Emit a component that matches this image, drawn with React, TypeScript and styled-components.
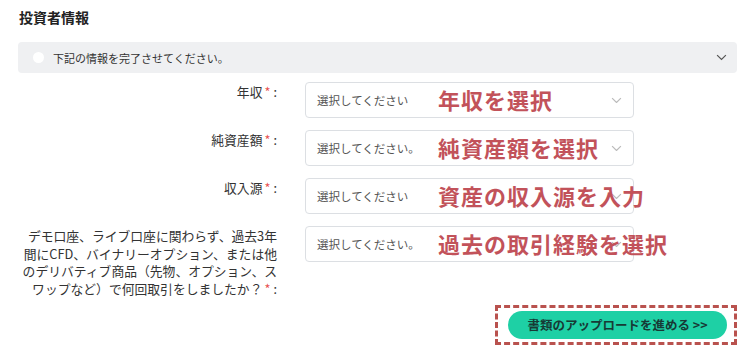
import React from "react";
import styled, { createGlobalStyle } from "styled-components";

const Global = createGlobalStyle`
  html, body { margin: 0; padding: 0; background: #fff; }
  body { font-family: "Noto Sans CJK JP", "Noto Sans", sans-serif; color: #333; }
`;

const Page = styled.div`
  width: 750px;
  height: 351px;
  box-sizing: border-box;
  padding: 7px 13px 0 18px;
  overflow: hidden;
`;

const Title = styled.h2`
  margin: 0 0 0 1px;
  font-size: 14px;
  font-weight: 700;
  line-height: 20px;
  color: #222;
`;

const Banner = styled.div`
  margin-top: 15px;
  height: 31px;
  background: #eff0f2;
  border-radius: 4px;
  display: flex;
  align-items: center;
  padding: 0 10px 0 15px;
  gap: 9px;
`;

const Dot = styled.span`
  width: 11px;
  height: 11px;
  border-radius: 50%;
  background: #fff;
`;

const BannerText = styled.span`
  flex: 1;
  font-size: 11px;
  color: #333;
`;

const Form = styled.div`
  margin-top: 9px;
  display: grid;
  grid-template-columns: 262px 329px;
  column-gap: 25px;
  row-gap: 12px;
`;

const Label = styled.div`
  padding-top: 1px;
  padding-right: 3px;
  text-align: right;
  font-size: 12.8px;
  line-height: 17.7px;
  color: #333;
  white-space: nowrap;
`;

const Req = styled.span`
  color: #e8504f;
  margin: 0 3px 0 2px;
`;

const Select = styled.div`
  position: relative;
  height: 36px;
  box-sizing: border-box;
  border: 1px solid #dcdfe3;
  border-radius: 4px;
  display: flex;
  align-items: center;
  padding: 0 11px;
`;

const Placeholder = styled.span`
  flex: 1;
  font-size: 11.5px;
  color: #555;
`;

const Note = styled.span`
  position: absolute;
  left: 132px;
  top: 50%;
  transform: translateY(-52%);
  font-size: 22px;
  font-weight: 700;
  letter-spacing: 1px;
  color: #c2525a;
  white-space: nowrap;
`;

const Footer = styled.div`
  display: flex;
  justify-content: flex-end;
  margin-top: 7px;
`;

const Dashed = styled.div`
  border: 3px dashed #b9524e;
  padding: 3px 7px 3px 10px;
`;

const Button = styled.button`
  height: 28px;
  width: 219px;
  border: none;
  border-radius: 14px;
  background: #1ed0a5;
  color: #173a35;
  font-family: "Noto Sans CJK JP", sans-serif;
  font-size: 12.5px;
  font-weight: 700;
  padding: 0;
`;

const Chevron = ({ color, size }: { color: string; size: number }) => (
  <svg width={size} height={size * 0.6} viewBox="0 0 10 6" fill="none">
    <path d="M1 1l4 4 4-4" stroke={color} strokeWidth="1.1" />
  </svg>
);

const rows: { label: string[]; ph: string; note: string }[] = [
  { label: ["年収"], ph: "選択してください", note: "年収を選択" },
  { label: ["純資産額"], ph: "選択してください。", note: "純資産額を選択" },
  { label: ["収入源"], ph: "選択してください", note: "資産の収入源を入力" },
  {
    label: [
      "デモ口座、ライブ口座に関わらず、過去3年",
      "間にCFD、バイナリーオプション、または他",
      "のデリバティブ商品（先物、オプション、ス",
      "ワップなど）で何回取引をしましたか？",
    ],
    ph: "選択してください。",
    note: "過去の取引経験を選択",
  },
];

export default function App() {
  return (
    <Page>
      <Global />
      <Title>投資者情報</Title>
      <Banner>
        <Dot />
        <BannerText>下記の情報を完了させてください。</BannerText>
        <Chevron color="#555" size={11} />
      </Banner>
      <Form>
        {rows.map((r) => (
          <React.Fragment key={r.note}>
            <Label>
              {r.label.map((line, i) => (
                <React.Fragment key={i}>
                  {i > 0 && <br />}
                  {line}
                </React.Fragment>
              ))}
              <Req>*</Req>:
            </Label>
            <Select>
              <Placeholder>{r.ph}</Placeholder>
              <Chevron color="#bbb" size={11} />
              <Note>{r.note}</Note>
            </Select>
          </React.Fragment>
        ))}
      </Form>
      <Footer>
        <Dashed>
          <Button>書類のアップロードを進める &gt;&gt;</Button>
        </Dashed>
      </Footer>
    </Page>
  );
}
